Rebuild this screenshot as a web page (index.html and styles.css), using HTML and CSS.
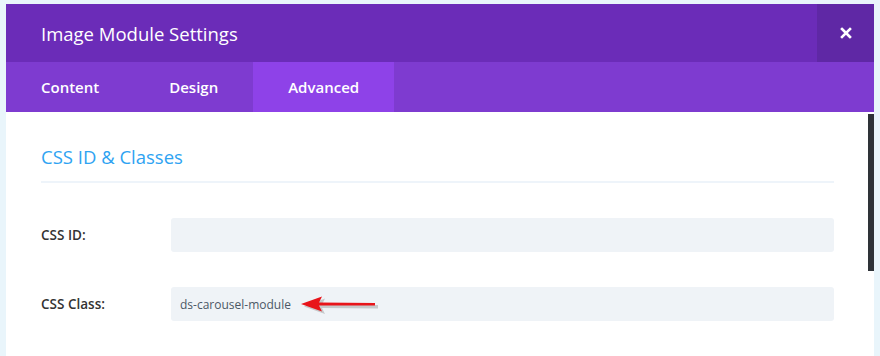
FILE: index.html
```html
<!DOCTYPE html>
<html lang="en">
<head>
    <meta charset="UTF-8">
    <meta name="viewport" content="width=device-width, initial-scale=1.0">
    <title>Image Module Settings</title>
    <link rel="stylesheet" href="styles.css">
</head>
<body>
    <div class="modal">
        <div class="modal-header">
            <h1>Image Module Settings</h1>
            <button class="close-btn" aria-label="Close">
                <svg width="12" height="12" viewBox="0 0 12 12">
                    <path d="M2 2 L10 10 M10 2 L2 10" stroke="#fff" stroke-width="2.6" stroke-linecap="square"/>
                </svg>
            </button>
        </div>

        <div class="tabs">
            <div class="tab">Content</div>
            <div class="tab">Design</div>
            <div class="tab active">Advanced</div>
        </div>

        <div class="modal-body">
            <div class="scroll-thumb"></div>

            <h2 class="section-title">CSS ID &amp; Classes</h2>

            <div class="field">
                <label>CSS ID:</label>
                <div class="input"></div>
            </div>

            <div class="field">
                <label>CSS Class:</label>
                <div class="input">
                    <span>ds-carousel-module</span>
                    <svg class="arrow" width="80" height="18" viewBox="0 0 80 18">
                        <path d="M4 10.5 L25 2.5 L22 8.5 L78 9 L78 12.5 L22 12 L25 18 Z" fill="#8a8a8a" opacity="0.4"/>
                        <path d="M1 8 L22 0.5 L19 6.5 L75 7 L75 9.5 L19 9.5 L22 15.5 Z" fill="#e8141a"/>
                    </svg>
                </div>
            </div>
        </div>
    </div>
</body>
</html>
```

FILE: styles.css
```css
body {
    margin: 0;
    padding: 4px 0 0 6px;
    background: #e9f5fb;
    font-family: 'Open Sans', 'Noto Sans', sans-serif;
}

.modal {
    width: 868px;
    height: 352px;
    background: white;
    position: relative;
    overflow: hidden;
}

.modal-header {
    height: 58px;
    background: #6b2cb8;
    display: flex;
    align-items: center;
    justify-content: space-between;
    padding-left: 35px;
}

h1 {
    margin: 0;
    font-size: 18.5px;
    font-weight: 400;
    color: white;
}

.close-btn {
    width: 57px;
    height: 58px;
    border: none;
    background: #5f28a5;
    display: flex;
    align-items: center;
    justify-content: center;
    padding: 0;
    cursor: pointer;
}

.tabs {
    height: 50px;
    background: #7e3bd0;
    display: flex;
}

.tab {
    padding: 0 35px;
    display: flex;
    align-items: center;
    color: white;
    font-size: 15px;
    font-weight: 600;
}

.tab.active {
    background: #8e42e8;
}

.modal-body {
    padding: 30px 40px 0 35px;
}

.scroll-thumb {
    position: absolute;
    right: 0;
    top: 110px;
    width: 6px;
    height: 157px;
    background: #2e3238;
}

.section-title {
    margin: 0;
    font-size: 18.5px;
    font-weight: 400;
    line-height: 30px;
    color: #2ea3f2;
    padding-bottom: 9px;
    border-bottom: 2px solid #eef4fa;
}

.field {
    display: flex;
    align-items: center;
    margin-top: 35px;
}

label {
    width: 130px;
    font-size: 13.5px;
    font-weight: 600;
    color: #333;
}

.input {
    flex: 1;
    height: 34px;
    background: #eff3f7;
    border-radius: 3px;
    display: flex;
    align-items: center;
    padding-left: 9px;
    font-size: 12px;
    color: #4c5866;
}

.arrow {
    margin-left: 9px;
    margin-top: 2px;
}
```
